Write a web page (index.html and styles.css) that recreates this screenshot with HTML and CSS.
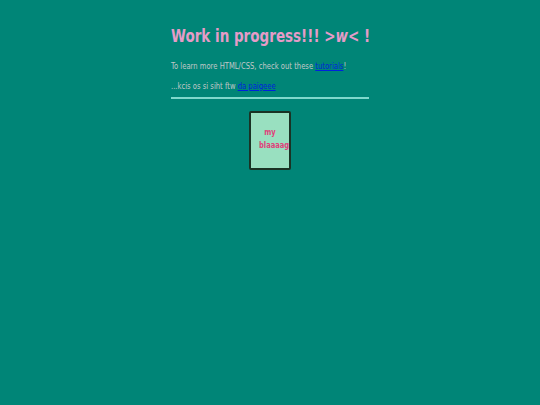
FILE: index.html
```html
<!DOCTYPE html>
<html>
<head>
<meta charset="utf-8">
<link rel="stylesheet" href="styles.css">
</head>
<body>
<div class="page">
  <h1 class="title">Work in progress!!! &gt;<em>w</em>&lt; !</h1>
  <p class="line">To learn more HTML/CSS, check out these <a href="#">tutorials</a>!</p>
  <p class="line">...kcis os si siht ftw <a href="#">da paigeee</a></p>
  <hr class="rule">
  <div class="card-row">
    <div class="card"><span class="card-text">my blaaaag</span></div>
  </div>
</div>
</body>
</html>
```

FILE: styles.css
```css
html, body {
  margin: 0;
  padding: 0;
}
body {
  background: #008577;
  font-family: "DejaVu Sans", sans-serif;
  width: 540px;
  height: 405px;
}
.page {
  width: 198px;
  margin: 0 auto;
  padding-top: 24px;
}
.title {
  margin: 0;
  font-size: 18px;
  font-weight: bold;
  color: #e59cc8;
  white-space: nowrap;
  line-height: 24px;
  transform: scaleX(0.75);
  transform-origin: left center;
}
.title em {
  font-style: italic;
}
.line {
  margin: 9px 0 0;
  font-size: 9.1px;
  line-height: 11px;
  color: #c0c8c8;
  white-space: nowrap;
  transform: scaleX(0.75);
  transform-origin: left center;
}
.line:first-of-type {
  margin-top: 13px;
}
.line a {
  color: #0022dd;
}
.rule {
  margin: 5px 0 0;
  border: 0;
  height: 2px;
  background: #7fd8cc;
}
.card-row {
  padding-left: 78px;
  margin-top: 12px;
}
.card {
  width: 22px;
  height: 34px;
  padding: 13px 8px 8px;
  border: 2px solid #1a3324;
  border-radius: 2px;
  background: #99e0c0;
  color: #e0407a;
  font-size: 9px;
  font-weight: bold;
  line-height: 13px;
}
.card-text {
  display: block;
  width: 29.33px;
  text-align: center;
  transform: scaleX(0.75);
  transform-origin: left center;
}
```
